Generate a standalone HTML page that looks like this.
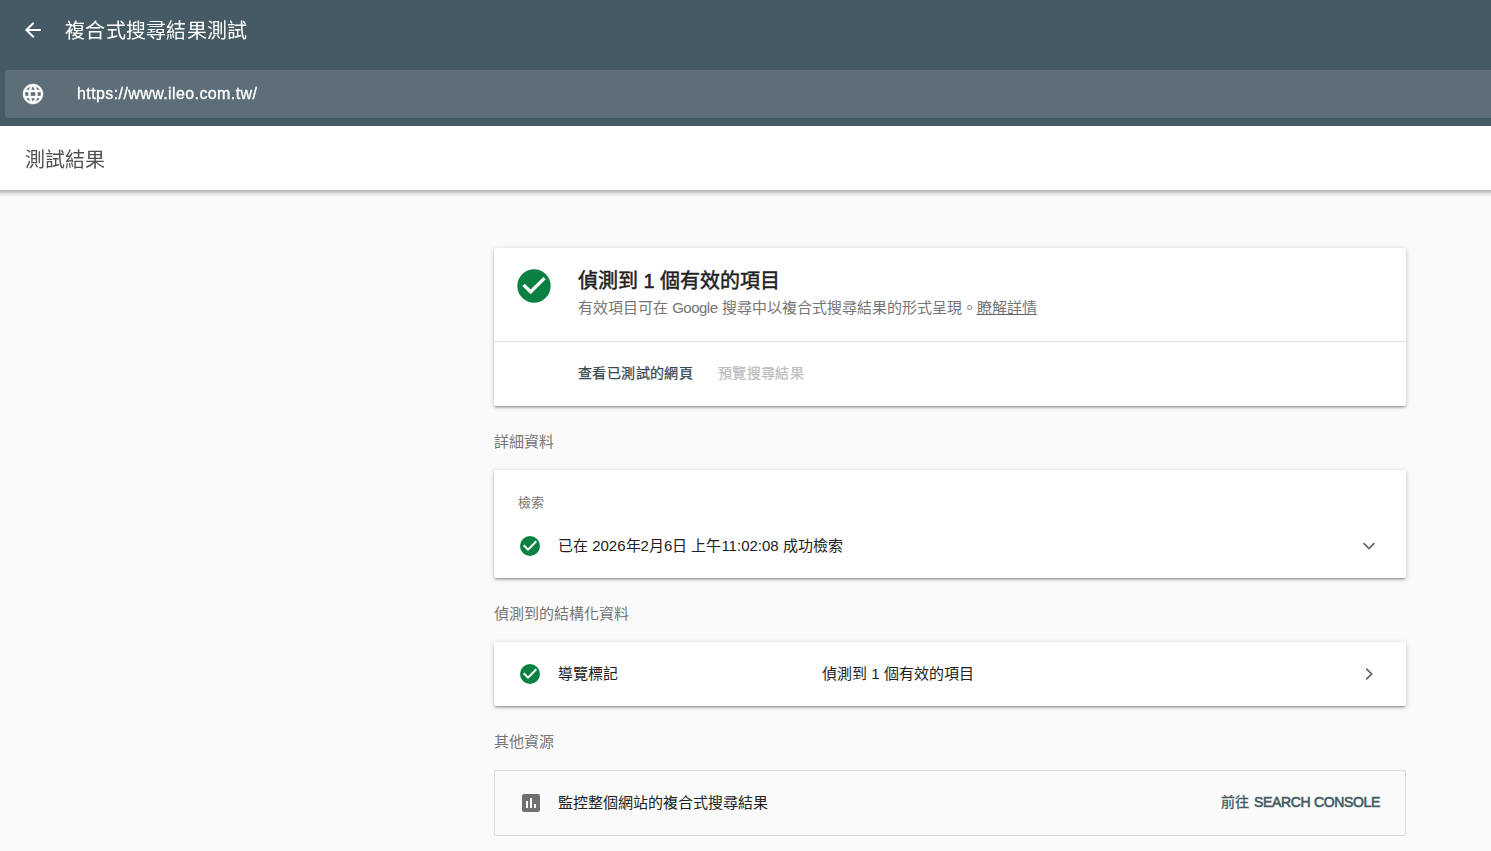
<!DOCTYPE html>
<html lang="zh-TW">
<head>
<meta charset="utf-8">
<title>複合式搜尋結果測試</title>
<style>
*{box-sizing:border-box;margin:0;padding:0}
html,body{width:1491px;height:851px;overflow:hidden}
body{background:#fafafa;font-family:"Liberation Sans",sans-serif;color:#212121;position:relative;-webkit-font-smoothing:antialiased}
.abs{position:absolute;white-space:nowrap;z-index:3}
svg{display:block}
/* header */
#hdr{position:absolute;left:0;top:0;width:1491px;height:126px;background:#455a64;z-index:2}
#back{left:21px;top:18px;width:24px;height:24px}
#title{left:65px;top:16px;height:30px;line-height:30px;font-size:20px;letter-spacing:.3px;color:#fff;will-change:transform}
#urlbar{position:absolute;left:5px;top:70px;width:1490px;height:48px;background:#5d6e78;border-radius:2px}
#globe{left:21px;top:82px;width:24px;height:24px}
#url{left:77px;top:82px;height:24px;line-height:24px;font-size:16px;letter-spacing:.4px;color:#fff;-webkit-text-stroke:.3px #fff;will-change:transform}
/* sub header */
#sub{position:absolute;left:-30px;top:126px;width:1551px;height:64px;z-index:1;background:#fff;box-shadow:0 3px 4px 0 rgba(0,0,0,.14),0 3px 3px -2px rgba(0,0,0,.12),0 1px 8px 0 rgba(0,0,0,.2)}
#subt{left:25px;top:145px;height:30px;line-height:30px;font-size:20px;color:#505050;will-change:transform}
/* cards */
.card{position:absolute;left:494px;width:912px;background:#fff;border-radius:2px;box-shadow:0 2px 2px 0 rgba(0,0,0,.14),0 3px 1px -2px rgba(0,0,0,.12),0 1px 5px 0 rgba(0,0,0,.2)}
#c1{top:248px;height:158px}
#c2{top:470px;height:108px}
#c3{top:642px;height:64px}
#c4{position:absolute;left:494px;top:770px;width:912px;height:66px;border:1px solid #dcdcdc;border-radius:2px;background:#fafafa}
#div1{position:absolute;left:494px;top:341px;width:912px;height:1px;background:#e0e0e0}
.lbl{font-size:15px;color:#757575;height:20px;line-height:20px;left:494px}
.t15{font-size:15px;color:#212121;height:20px;line-height:20px}
</style>
</head>
<body>
<div id="hdr">
  <div id="urlbar"></div>
</div>
<svg id="back" class="abs" viewBox="0 0 24 24"><path fill="#fff" d="M20 11H7.83l5.59-5.59L12 4l-8 8 8 8 1.41-1.41L7.83 13H20v-2z"/></svg>
<div id="title" class="abs">複合式搜尋結果測試</div>
<svg id="globe" class="abs" viewBox="0 0 24 24"><path fill="#fff" stroke="#fff" stroke-width=".4" d="M11.99 2C6.47 2 2 6.48 2 12s4.47 10 9.99 10C17.52 22 22 17.52 22 12S17.52 2 11.99 2zm6.93 6h-2.95c-.32-1.25-.78-2.45-1.38-3.56 1.84.63 3.37 1.91 4.33 3.56zM12 4.04c.83 1.2 1.48 2.53 1.91 3.96h-3.82c.43-1.43 1.08-2.76 1.91-3.96zM4.26 14C4.1 13.36 4 12.69 4 12s.1-1.36.26-2h3.38c-.08.66-.14 1.32-.14 2 0 .68.06 1.34.14 2H4.26zm.82 2h2.95c.32 1.25.78 2.45 1.38 3.56-1.84-.63-3.37-1.9-4.33-3.56zm2.95-8H5.08c.96-1.66 2.49-2.93 4.33-3.56C8.810 5.550 8.350 6.750 8.030 8zM12 19.960c-.83-1.2-1.480-2.530-1.910-3.960h3.820c-.43 1.430-1.080 2.760-1.910 3.960zM14.340 14H9.660c-.09-.66-.16-1.320-.16-2 0-.68.07-1.350.16-2h4.680c.09.65.16 1.320.16 2 0 .68-.07 1.340-.16 2zm.25 5.560c.6-1.110 1.060-2.310 1.380-3.560h2.950c-.96 1.650-2.490 2.930-4.330 3.560zM16.360 14c.08-.66.14-1.320.14-2 0-.68-.06-1.340-.14-2h3.380c.16.64.26 1.310.26 2s-.1 1.360-.26 2h-3.380z"/></svg>
<div id="url" class="abs">https://www.ileo.com.tw/</div>

<div id="sub"></div>
<div id="subt" class="abs">測試結果</div>

<!-- card 1 -->
<div id="c1" class="card"></div>
<div id="div1"></div>
<svg class="abs" style="left:513.6px;top:265.8px;width:40px;height:40px" viewBox="0 0 24 24"><circle cx="12" cy="12" r="10" fill="#0b8043"/><path fill="#fff" d="M10 17l-5-5 1.41-1.41L10 14.17l7.59-7.59L19 8l-9 9z"/></svg>
<div class="abs" id="c1t" style="left:578px;top:266px;height:30px;line-height:30px;font-size:20px;-webkit-text-stroke:.5px #212121;color:#212121">偵測到 1 個有效的項目</div>
<div class="abs" id="c1s" style="left:578px;top:298px;height:20px;line-height:20px;font-size:15px;color:#757575">有效項目可在 <span style="letter-spacing:-.5px">Google</span> 搜尋中以複合式搜尋結果的形式呈現。<span style="text-decoration:underline;text-decoration-color:#616161">瞭解詳情</span></div>
<div class="abs" id="b1" style="left:578px;top:363px;height:20px;line-height:20px;font-size:14px;-webkit-text-stroke:.25px #37474f;letter-spacing:.4px;color:#37474f">查看已測試的網頁</div>
<div class="abs" id="b2" style="left:718px;top:363px;height:20px;line-height:20px;font-size:14px;-webkit-text-stroke:.25px #bdbdbd;letter-spacing:.35px;color:#bdbdbd">預覽搜尋結果</div>

<div class="abs lbl" id="l1" style="top:432px">詳細資料</div>

<!-- card 2 -->
<div id="c2" class="card"></div>
<div class="abs" id="c2l" style="left:518px;top:494px;height:18px;line-height:18px;font-size:13px;color:#757575">檢索</div>
<svg class="abs" style="left:517.6px;top:534px;width:24px;height:24px" viewBox="0 0 24 24"><circle cx="12" cy="12" r="10" fill="#0b8043"/><path fill="#fff" d="M10 17l-5-5 1.41-1.41L10 14.17l7.59-7.59L19 8l-9 9z"/></svg>
<div class="abs t15" id="c2t" style="left:558px;top:536px">已在 2026年2月6日 上午11:02:08 成功檢索</div>
<svg class="abs" style="left:1357.1px;top:534.2px;width:24px;height:24px" viewBox="0 0 24 24"><polyline fill="none" stroke="#5f6368" stroke-width="1.7" points="6.6,9.2 12,14.6 17.4,9.2"/></svg>

<div class="abs lbl" id="l2" style="top:604px">偵測到的結構化資料</div>

<!-- card 3 -->
<div id="c3" class="card"></div>
<svg class="abs" style="left:517.6px;top:662px;width:24px;height:24px" viewBox="0 0 24 24"><circle cx="12" cy="12" r="10" fill="#0b8043"/><path fill="#fff" d="M10 17l-5-5 1.41-1.41L10 14.17l7.59-7.59L19 8l-9 9z"/></svg>
<div class="abs t15" id="c3t" style="left:558px;top:664px">導覽標記</div>
<div class="abs t15" id="c3v" style="left:822px;top:664px">偵測到 1 個有效的項目</div>
<svg class="abs" style="left:1357.4px;top:662px;width:24px;height:24px" viewBox="0 0 24 24"><polyline fill="none" stroke="#5f6368" stroke-width="1.7" points="9.2,6.6 14.6,12 9.2,17.4"/></svg>

<div class="abs lbl" id="l3" style="top:732px">其他資源</div>

<!-- card 4 -->
<div id="c4"></div>
<svg class="abs" style="left:518.5px;top:790.7px;width:24px;height:24px" viewBox="0 0 24 24"><path fill="#707070" d="M19 3H5c-1.100 0-2 .9-2 2v14c0 1.100.9 2 2 2h14c1.100 0 2-.9 2-2V5c0-1.100-.9-2-2-2zM9 17H7v-7h2v7zm4 0h-2V7h2v10zm4 0h-2v-4h2v4z"/></svg>
<div class="abs t15" id="c4t" style="left:558px;top:793px">監控整個網站的複合式搜尋結果</div>
<div class="abs" id="c4b" style="left:1221px;top:792px;height:20px;line-height:20px;font-size:14px;-webkit-text-stroke:.35px #455a64;color:#455a64">前往 <span id="sc" style="letter-spacing:-.32px;margin-left:1px;-webkit-text-stroke:.6px #455a64">SEARCH CONSOLE</span></div>
</body>
</html>
